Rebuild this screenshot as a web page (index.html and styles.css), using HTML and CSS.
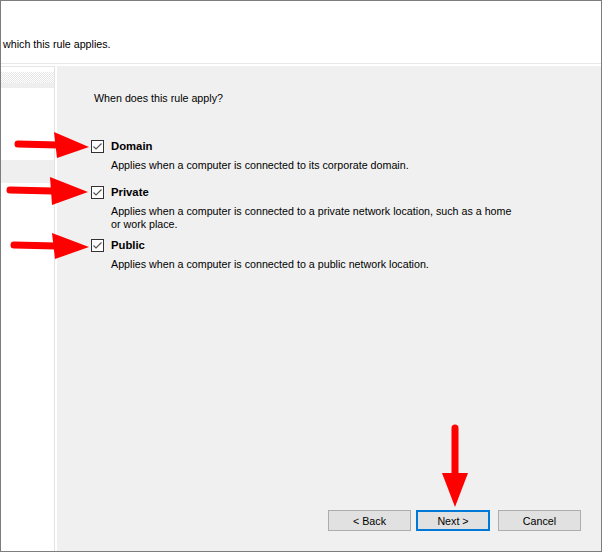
FILE: index.html
```html
<!DOCTYPE html>
<html>
<head>
<meta charset="utf-8">
<link rel="stylesheet" href="styles.css">
</head>
<body>
<div class="window">
  <div class="header">
    <p class="header-text">which this rule applies.</p>
  </div>
  <div class="body">
    <div class="sidebar">
      <div class="sidebar-band"></div>
      <div class="sidebar-selected"></div>
    </div>
    <div class="main">
      <p class="question">When does this rule apply?</p>
      <div class="options">
        <div class="option option-domain">
          <div class="option-head">
            <svg class="check" width="13" height="13" viewBox="0 0 13 13"><rect x="0.5" y="0.5" width="12" height="12" fill="#fff" stroke="#333"/><path d="M2.5 6.5 L5 9 L10.5 3.5" fill="none" stroke="#555" stroke-width="1.2"/></svg>
            <span class="option-label">Domain</span>
          </div>
          <p class="desc">Applies when a computer is connected to its corporate domain.</p>
        </div>
        <div class="option option-private">
          <div class="option-head">
            <svg class="check" width="13" height="13" viewBox="0 0 13 13"><rect x="0.5" y="0.5" width="12" height="12" fill="#fff" stroke="#333"/><path d="M2.5 6.5 L5 9 L10.5 3.5" fill="none" stroke="#555" stroke-width="1.2"/></svg>
            <span class="option-label">Private</span>
          </div>
          <p class="desc">Applies when a computer is connected to a private network location, such as a home<br>or work place.</p>
        </div>
        <div class="option option-public">
          <div class="option-head">
            <svg class="check" width="13" height="13" viewBox="0 0 13 13"><rect x="0.5" y="0.5" width="12" height="12" fill="#fff" stroke="#333"/><path d="M2.5 6.5 L5 9 L10.5 3.5" fill="none" stroke="#555" stroke-width="1.2"/></svg>
            <span class="option-label">Public</span>
          </div>
          <p class="desc">Applies when a computer is connected to a public network location.</p>
        </div>
      </div>
      <div class="buttons">
        <button class="btn btn-back">&lt; Back</button>
        <button class="btn btn-next">Next &gt;</button>
        <button class="btn btn-cancel">Cancel</button>
      </div>
    </div>
  </div>
  <svg class="arrows" width="602" height="552" viewBox="0 0 602 552">
    <g fill="#ff0000" stroke="none">
      <polygon points="54,132 89,147 57,158"/>
      <polygon points="50,177 88,192 52,205"/>
      <polygon points="52,233 89,247 55,259"/>
      <polygon points="442,473 468,473 455,507"/>
    </g>
    <g stroke="#ff0000" stroke-width="7" stroke-linecap="round" fill="none">
      <line x1="18" y1="144" x2="58" y2="145"/>
      <line x1="10" y1="190" x2="53" y2="191"/>
      <line x1="14" y1="245" x2="56" y2="246"/>
      <line x1="455" y1="428" x2="455" y2="476"/>
    </g>
  </svg>
</div>
</body>
</html>
```
FILE: styles.css
```css
html, body {
  margin: 0;
  padding: 0;
  background: #ffffff;
}

.window {
  position: relative;
  width: 602px;
  height: 552px;
  box-sizing: border-box;
  border: 1px solid #7d7d7d;
  background: #ffffff;
  display: flex;
  flex-direction: column;
  font-family: "Liberation Sans", Arial, sans-serif;
  font-size: 10.7px;
  color: #000;
}

.header {
  height: 62px;
  border-bottom: 1px solid #e8e8e8;
  flex: none;
  display: flex;
  align-items: flex-start;
}

.header-text {
  margin: 36px 0 0 2px;
  line-height: 14px;
}

.body {
  flex: 1;
  display: flex;
  padding-top: 2px;
  min-height: 0;
}

.sidebar {
  width: 53px;
  border-top: 1px solid #e6e6e6;
  border-right: 1px solid #e3e3e3;
  margin-right: 2px;
  flex: none;
  display: flex;
  flex-direction: column;
}

.sidebar-band {
  height: 16px;
  margin-top: 5px;
  background:
    conic-gradient(#ffffff 25%, #e6e6e6 0 50%, #ffffff 0 75%, #e6e6e6 0) top left / 2px 2px,
    #eeeeee;
  background-size: 2px 2px;
  background-repeat: repeat;
  box-shadow: inset 0 -5px 0 #eeeeee;
}

.sidebar-selected {
  height: 23px;
  margin-top: 72px;
  background: #efefef;
}

.main {
  flex: 1;
  background: #f0f0f0;
  display: flex;
  flex-direction: column;
  padding: 25px 20px 20px 34px;
}

.question {
  margin: 0 0 0 3px;
  line-height: 14px;
}

.options {
  display: flex;
  flex-direction: column;
  margin-top: 34px;
}

.option-head {
  display: flex;
  align-items: center;
  height: 14px;
}

.check {
  flex: none;
  display: block;
}

.option-label {
  font-weight: bold;
  font-size: 11.3px;
  margin-left: 7px;
  line-height: 14px;
}

.desc {
  margin: 6px 0 0 20px;
  line-height: 13px;
}

.option-private {
  margin-top: 13px;
}

.option-public {
  margin-top: 7px;
}

.buttons {
  margin-top: auto;
  display: flex;
  justify-content: flex-end;
  align-items: center;
}

.btn {
  height: 21px;
  box-sizing: border-box;
  background: #e1e1e1;
  border: 1px solid #adadad;
  font-family: "Liberation Sans", Arial, sans-serif;
  font-size: 10.7px;
  color: #000;
  padding: 0;
}

.btn-back {
  width: 83px;
}

.btn-next {
  width: 74px;
  margin-left: 5px;
  border: 2px solid #0078d7;
}

.btn-cancel {
  width: 83px;
  margin-left: 8px;
}

.arrows {
  position: absolute;
  left: -1px;
  top: -1px;
  pointer-events: none;
}
```
